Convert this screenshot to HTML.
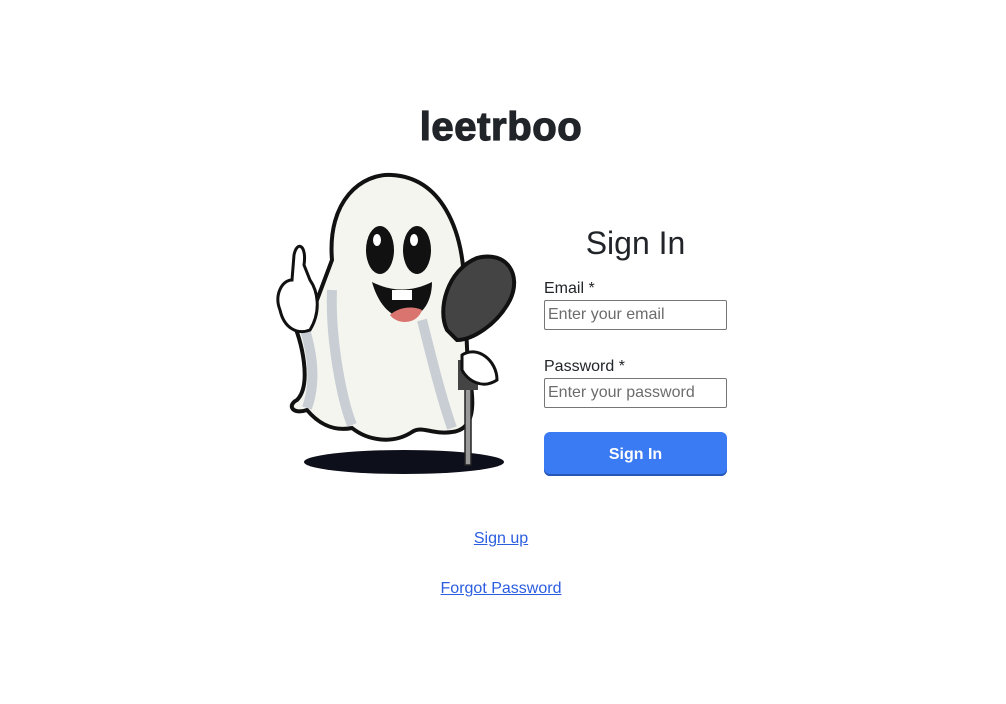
<!DOCTYPE html>
<html><head><style>
body{margin:0;width:1006px;height:704px;background:#fff;font-family:"Liberation Sans",Arial,sans-serif;color:#212529;position:relative}
.abs{position:absolute}
h1{position:absolute;left:0;width:1002px;top:104px;margin:0;text-align:center;font-size:40px;font-weight:900;letter-spacing:0.6px;line-height:46px;-webkit-text-stroke:1.2px #212529}
.title{left:544px;width:183px;top:223px;text-align:center;font-size:32px;line-height:40px}
label{position:absolute;left:544px;font-size:16px;line-height:20px}
.in{position:absolute;left:544px;border:1px solid #767676;border-radius:2px;font-size:16px;color:#6c6c6c;line-height:28px;padding-left:3px;box-sizing:border-box;width:183px;height:30px}
.btn{left:544px;top:432px;width:183px;height:44px;background:#3a7bf3;border-radius:6px;box-shadow:inset 0 -2px 0 #2757b5;color:#fff;font-weight:bold;font-size:16px;text-align:center;line-height:45px}
a{position:absolute;color:#2a5de0;font-size:16px;text-decoration:underline;width:1002px;left:0;text-align:center}
</style></head><body>
<h1>leetrboo</h1>
<svg class="abs" style="left:272px;top:170px" width="252" height="308" viewBox="0 0 252 308">
<ellipse cx="132" cy="292" rx="100" ry="12" fill="#0d0f1a"/>
<path d="M60 90 C55 30 90 3 120 5 C170 8 190 60 192 110 L196 200 C205 240 200 260 180 262 C160 265 150 255 140 262 C120 275 95 270 80 258 C60 262 45 252 35 240 C20 245 15 235 25 230 C40 215 30 170 20 150 L45 130 Z" fill="#f5f5f0" stroke="#111" stroke-width="4"/>
<path d="M60 120 C58 170 70 230 80 255 M150 150 C160 190 170 230 180 258 M30 150 C40 180 45 210 35 238" stroke="#c8ced4" stroke-width="10" fill="none"/>
<path d="M8 140 C2 125 10 110 20 110 L22 85 C25 70 35 75 32 95 L38 110 C45 120 50 140 38 160 C25 165 12 158 8 140Z" fill="#fff" stroke="#111" stroke-width="3"/>
<ellipse cx="108" cy="80" rx="14" ry="24" fill="#111"/><ellipse cx="145" cy="80" rx="14" ry="24" fill="#111"/>
<ellipse cx="105" cy="70" rx="4" ry="6" fill="#fff"/><ellipse cx="142" cy="70" rx="4" ry="6" fill="#fff"/>
<path d="M100 112 C115 165 160 155 160 112 C140 122 120 122 100 112Z" fill="#111"/>
<path d="M118 145 C125 155 145 155 150 140 C140 135 125 138 118 145Z" fill="#d9746e"/>
<rect x="120" y="120" width="20" height="10" fill="#fff"/>
<rect x="193" y="200" width="6" height="95" fill="#999" stroke="#222" stroke-width="1.5"/>
<rect x="186" y="190" width="20" height="30" fill="#444"/>
<path d="M175 160 C165 140 175 100 205 88 C235 80 250 105 238 130 C225 155 200 170 185 170Z" fill="#444" stroke="#111" stroke-width="4"/>
<path d="M190 185 C205 175 225 190 225 210 C210 220 195 210 190 200Z" fill="#fff" stroke="#111" stroke-width="3"/>
</svg>
<div class="abs title">Sign In</div>
<label style="top:279px">Email *</label>
<div class="in" style="top:300px">Enter your email</div>
<label style="top:357px">Password *</label>
<div class="in" style="top:378px">Enter your password</div>
<div class="abs btn">Sign In</div>
<a style="top:530px">Sign up</a>
<a style="top:580px">Forgot Password</a>
</body></html>
